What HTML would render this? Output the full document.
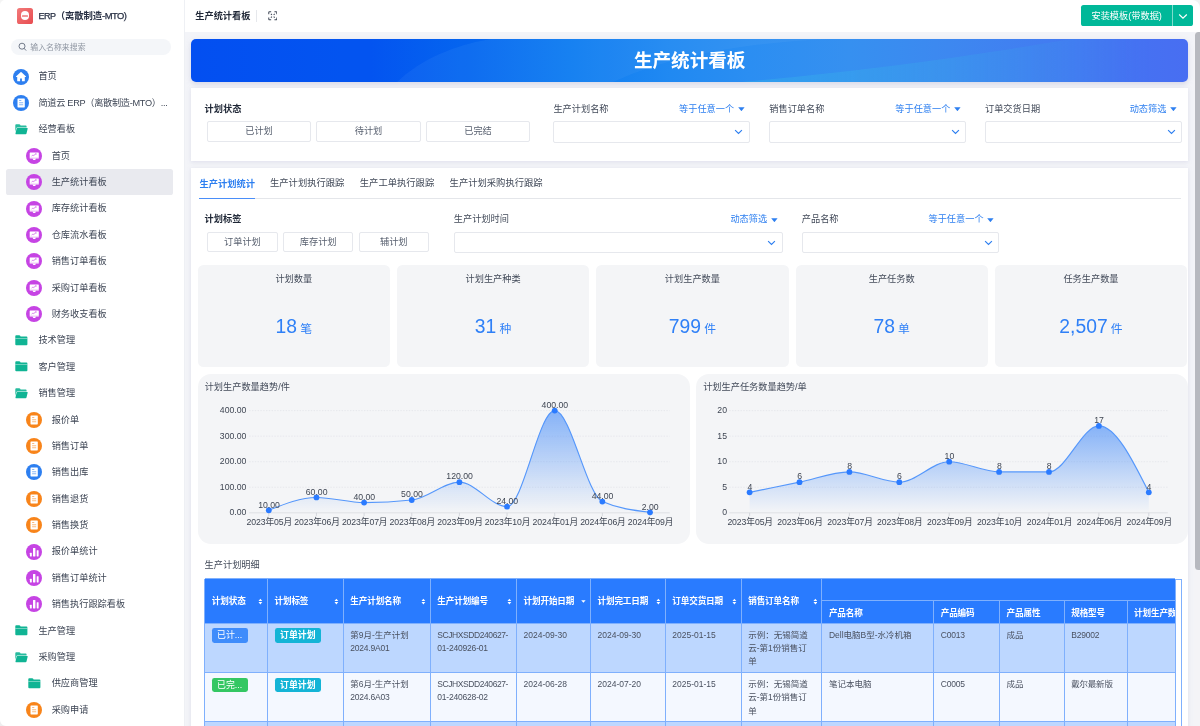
<!DOCTYPE html>
<html lang="zh"><head><meta charset="utf-8"><title>生产统计看板</title>
<style>
html,body{margin:0;padding:0;}
body{width:1200px;height:726px;overflow:hidden;background:#f3f4f8;font-family:"Liberation Sans", "Noto Sans CJK SC", sans-serif;position:relative;}
#root{position:absolute;left:0;top:0;width:1200px;height:726px;overflow:hidden;will-change:transform;}
.b{position:absolute;display:block;}
.t{position:absolute;white-space:nowrap;}
</style></head><body><div id="root">
<div class="b" style="left:0;top:0;width:184px;height:726px;background:#fff;"></div>
<div class="b" style="left:17px;top:7.5px;width:16px;height:16px;border-radius:2.6px;background:linear-gradient(135deg,#f27a7a,#e84c50);"></div>
<div class="b" style="left:20.8px;top:11.3px;width:8.4px;height:8.4px;border-radius:50%;background:#fff;"></div>
<div class="b" style="left:22.3px;top:14.5px;width:5.4px;height:2px;background:#f29a9a;border-radius:.6px"></div>
<div class="t" style="top:9.02px;font-size:9.4px;line-height:13.16px;color:#283044;font-weight:bold;left:38.50px;letter-spacing:-0.1px;"><span style="font-weight:normal;-webkit-text-stroke:0.25px #283044;letter-spacing:-0.55px;margin-right:0.3px;font-size:9px">ERP</span>（离散制造<span style="font-weight:normal;-webkit-text-stroke:0.25px #283044;letter-spacing:-0.5px">-MTO)</span></div>
<div class="b" style="left:11.00px;top:38.80px;width:160.00px;height:16.20px;background:#f4f6f9;border-radius:8.1px;"></div>
<svg class="b" style="left:17.5px;top:42.3px" width="10" height="10" viewBox="0 0 10 10"><circle cx="4" cy="4.2" r="3" fill="none" stroke="#5c6577" stroke-width="0.85"/><path d="M6.2 6.5L7.9 8.3" stroke="#5c6577" stroke-width="0.85" stroke-linecap="round"/></svg>
<div class="t" style="top:41.67px;font-size:7.9px;line-height:11.06px;color:#9097a3;left:30.30px;">输入名称来搜索</div>
<svg class="b" style="left:13.05px;top:68.60px" width="16" height="16" viewBox="0 0 16 16"><circle cx="8" cy="8" r="8" fill="#2d7ff0"/><path d="M8 2.9Q8.25 2.9 8.5 3.15L13 7.4Q13.2 7.9 12.7 7.9H11.8V11.7Q11.8 12.2 11.3 12.2H8.9V9.4H7.1V12.2H4.7Q4.2 12.2 4.2 11.7V7.9H3.3Q2.8 7.9 3 7.4L7.5 3.15Q7.75 2.9 8 2.9z" fill="#fff"/></svg>
<div class="t" style="top:70.46px;font-size:9.2px;line-height:12.88px;color:#3d4554;left:38.40px;">首页</div>
<svg class="b" style="left:13.05px;top:94.99px" width="16" height="16" viewBox="0 0 16 16"><circle cx="8" cy="8" r="8" fill="#2d7ff0"/><rect x="4.5" y="3.5" width="7.3" height="8.9" rx="0.6" fill="#fff"/><rect x="6.1" y="5.2" width="2.2" height="0.8" fill="#2d7ff0" opacity=".7"/><rect x="6.1" y="7.4" width="4.1" height="0.8" fill="#2d7ff0" opacity=".7"/><rect x="6.1" y="9.4" width="4.1" height="0.8" fill="#2d7ff0" opacity=".7"/></svg>
<div class="t" style="top:96.85px;font-size:9.2px;line-height:12.88px;color:#3d4554;left:38.40px;letter-spacing:-0.3px;">简道云 ERP（离散制造-MTO）...</div>
<svg class="b" style="left:14.65px;top:124.38px" width="13" height="10.5" viewBox="0 0 13 10.5"><path d="M0.3 1.2Q0.3 0.3 1.2 0.3H4.3Q4.9 0.3 5.2 0.8L5.6 1.5H10.7Q11.6 1.5 11.6 2.4V3.4H2.2Q1.5 3.4 1.3 4.1L0.3 8z" fill="#10b494" opacity=".9"/><path d="M2.4 3.9H12.2Q12.9 3.9 12.7 4.6L11.5 9.6Q11.3 10.2 10.6 10.2H0.9Q0.3 10.2 0.5 9.5L1.6 4.6Q1.8 3.9 2.4 3.9z" fill="#10b494"/></svg>
<div class="t" style="top:123.24px;font-size:9.2px;line-height:12.88px;color:#3d4554;left:38.40px;">经营看板</div>
<svg class="b" style="left:26.30px;top:147.77px" width="16" height="16" viewBox="0 0 16 16"><circle cx="8" cy="8" r="8" fill="#c644e4"/><rect x="3.7" y="4.6" width="9.1" height="6" rx="0.4" fill="#fff"/><path d="M6.5 10.5h3.5l-0.8 1.5h-1.9z" fill="#fff"/><rect x="3.7" y="9.3" width="9.1" height="0.5" fill="#c644e4" opacity=".28"/><path d="M5.6 8.3L6.9 6.9L7.7 7.6L9.2 6.3" stroke="#c644e4" stroke-width="0.75" fill="none" opacity=".85"/><circle cx="9.9" cy="6.1" r="0.75" fill="#c644e4" opacity=".85"/></svg>
<div class="t" style="top:149.63px;font-size:9.2px;line-height:12.88px;color:#3d4554;left:51.70px;">首页</div>
<div class="b" style="left:5.60px;top:169.26px;width:167.40px;height:25.80px;background:#e9eaef;border-radius:2.6px;"></div>
<svg class="b" style="left:26.30px;top:174.16px" width="16" height="16" viewBox="0 0 16 16"><circle cx="8" cy="8" r="8" fill="#c644e4"/><rect x="3.7" y="4.6" width="9.1" height="6" rx="0.4" fill="#fff"/><path d="M6.5 10.5h3.5l-0.8 1.5h-1.9z" fill="#fff"/><rect x="3.7" y="9.3" width="9.1" height="0.5" fill="#c644e4" opacity=".28"/><path d="M5.6 8.3L6.9 6.9L7.7 7.6L9.2 6.3" stroke="#c644e4" stroke-width="0.75" fill="none" opacity=".85"/><circle cx="9.9" cy="6.1" r="0.75" fill="#c644e4" opacity=".85"/></svg>
<div class="t" style="top:176.02px;font-size:9.2px;line-height:12.88px;color:#3d4554;left:51.70px;">生产统计看板</div>
<svg class="b" style="left:26.30px;top:200.55px" width="16" height="16" viewBox="0 0 16 16"><circle cx="8" cy="8" r="8" fill="#c644e4"/><rect x="3.7" y="4.6" width="9.1" height="6" rx="0.4" fill="#fff"/><path d="M6.5 10.5h3.5l-0.8 1.5h-1.9z" fill="#fff"/><rect x="3.7" y="9.3" width="9.1" height="0.5" fill="#c644e4" opacity=".28"/><path d="M5.6 8.3L6.9 6.9L7.7 7.6L9.2 6.3" stroke="#c644e4" stroke-width="0.75" fill="none" opacity=".85"/><circle cx="9.9" cy="6.1" r="0.75" fill="#c644e4" opacity=".85"/></svg>
<div class="t" style="top:202.41px;font-size:9.2px;line-height:12.88px;color:#3d4554;left:51.70px;">库存统计看板</div>
<svg class="b" style="left:26.30px;top:226.94px" width="16" height="16" viewBox="0 0 16 16"><circle cx="8" cy="8" r="8" fill="#c644e4"/><rect x="3.7" y="4.6" width="9.1" height="6" rx="0.4" fill="#fff"/><path d="M6.5 10.5h3.5l-0.8 1.5h-1.9z" fill="#fff"/><rect x="3.7" y="9.3" width="9.1" height="0.5" fill="#c644e4" opacity=".28"/><path d="M5.6 8.3L6.9 6.9L7.7 7.6L9.2 6.3" stroke="#c644e4" stroke-width="0.75" fill="none" opacity=".85"/><circle cx="9.9" cy="6.1" r="0.75" fill="#c644e4" opacity=".85"/></svg>
<div class="t" style="top:228.80px;font-size:9.2px;line-height:12.88px;color:#3d4554;left:51.70px;">仓库流水看板</div>
<svg class="b" style="left:26.30px;top:253.33px" width="16" height="16" viewBox="0 0 16 16"><circle cx="8" cy="8" r="8" fill="#c644e4"/><rect x="3.7" y="4.6" width="9.1" height="6" rx="0.4" fill="#fff"/><path d="M6.5 10.5h3.5l-0.8 1.5h-1.9z" fill="#fff"/><rect x="3.7" y="9.3" width="9.1" height="0.5" fill="#c644e4" opacity=".28"/><path d="M5.6 8.3L6.9 6.9L7.7 7.6L9.2 6.3" stroke="#c644e4" stroke-width="0.75" fill="none" opacity=".85"/><circle cx="9.9" cy="6.1" r="0.75" fill="#c644e4" opacity=".85"/></svg>
<div class="t" style="top:255.19px;font-size:9.2px;line-height:12.88px;color:#3d4554;left:51.70px;">销售订单看板</div>
<svg class="b" style="left:26.30px;top:279.72px" width="16" height="16" viewBox="0 0 16 16"><circle cx="8" cy="8" r="8" fill="#c644e4"/><rect x="3.7" y="4.6" width="9.1" height="6" rx="0.4" fill="#fff"/><path d="M6.5 10.5h3.5l-0.8 1.5h-1.9z" fill="#fff"/><rect x="3.7" y="9.3" width="9.1" height="0.5" fill="#c644e4" opacity=".28"/><path d="M5.6 8.3L6.9 6.9L7.7 7.6L9.2 6.3" stroke="#c644e4" stroke-width="0.75" fill="none" opacity=".85"/><circle cx="9.9" cy="6.1" r="0.75" fill="#c644e4" opacity=".85"/></svg>
<div class="t" style="top:281.58px;font-size:9.2px;line-height:12.88px;color:#3d4554;left:51.70px;">采购订单看板</div>
<svg class="b" style="left:26.30px;top:306.11px" width="16" height="16" viewBox="0 0 16 16"><circle cx="8" cy="8" r="8" fill="#c644e4"/><rect x="3.7" y="4.6" width="9.1" height="6" rx="0.4" fill="#fff"/><path d="M6.5 10.5h3.5l-0.8 1.5h-1.9z" fill="#fff"/><rect x="3.7" y="9.3" width="9.1" height="0.5" fill="#c644e4" opacity=".28"/><path d="M5.6 8.3L6.9 6.9L7.7 7.6L9.2 6.3" stroke="#c644e4" stroke-width="0.75" fill="none" opacity=".85"/><circle cx="9.9" cy="6.1" r="0.75" fill="#c644e4" opacity=".85"/></svg>
<div class="t" style="top:307.97px;font-size:9.2px;line-height:12.88px;color:#3d4554;left:51.70px;">财务收支看板</div>
<svg class="b" style="left:14.65px;top:335.10px" width="13" height="10.5" viewBox="0 0 13 10.5"><path d="M0.3 1.2Q0.3 0.3 1.2 0.3H4.3Q4.9 0.3 5.2 0.8L5.6 1.5H11.5Q12.4 1.5 12.4 2.4V9.3Q12.4 10.2 11.5 10.2H1.2Q0.3 10.2 0.3 9.3z" fill="#10b494"/><rect x="0.3" y="3.1" width="12.1" height="0.9" fill="#fff" opacity=".45"/></svg>
<div class="t" style="top:334.36px;font-size:9.2px;line-height:12.88px;color:#3d4554;left:38.40px;">技术管理</div>
<svg class="b" style="left:14.65px;top:361.49px" width="13" height="10.5" viewBox="0 0 13 10.5"><path d="M0.3 1.2Q0.3 0.3 1.2 0.3H4.3Q4.9 0.3 5.2 0.8L5.6 1.5H11.5Q12.4 1.5 12.4 2.4V9.3Q12.4 10.2 11.5 10.2H1.2Q0.3 10.2 0.3 9.3z" fill="#10b494"/><rect x="0.3" y="3.1" width="12.1" height="0.9" fill="#fff" opacity=".45"/></svg>
<div class="t" style="top:360.75px;font-size:9.2px;line-height:12.88px;color:#3d4554;left:38.40px;">客户管理</div>
<svg class="b" style="left:14.65px;top:388.28px" width="13" height="10.5" viewBox="0 0 13 10.5"><path d="M0.3 1.2Q0.3 0.3 1.2 0.3H4.3Q4.9 0.3 5.2 0.8L5.6 1.5H10.7Q11.6 1.5 11.6 2.4V3.4H2.2Q1.5 3.4 1.3 4.1L0.3 8z" fill="#10b494" opacity=".9"/><path d="M2.4 3.9H12.2Q12.9 3.9 12.7 4.6L11.5 9.6Q11.3 10.2 10.6 10.2H0.9Q0.3 10.2 0.5 9.5L1.6 4.6Q1.8 3.9 2.4 3.9z" fill="#10b494"/></svg>
<div class="t" style="top:387.14px;font-size:9.2px;line-height:12.88px;color:#3d4554;left:38.40px;">销售管理</div>
<svg class="b" style="left:26.30px;top:411.67px" width="16" height="16" viewBox="0 0 16 16"><circle cx="8" cy="8" r="8" fill="#f8841a"/><rect x="4.5" y="3.5" width="7.3" height="8.9" rx="0.6" fill="#fff"/><rect x="6.1" y="5.2" width="2.2" height="0.8" fill="#f8841a" opacity=".7"/><rect x="6.1" y="7.4" width="4.1" height="0.8" fill="#f8841a" opacity=".7"/><rect x="6.1" y="9.4" width="4.1" height="0.8" fill="#f8841a" opacity=".7"/></svg>
<div class="t" style="top:413.53px;font-size:9.2px;line-height:12.88px;color:#3d4554;left:51.70px;">报价单</div>
<svg class="b" style="left:26.30px;top:438.06px" width="16" height="16" viewBox="0 0 16 16"><circle cx="8" cy="8" r="8" fill="#f8841a"/><rect x="4.5" y="3.5" width="7.3" height="8.9" rx="0.6" fill="#fff"/><rect x="6.1" y="5.2" width="2.2" height="0.8" fill="#f8841a" opacity=".7"/><rect x="6.1" y="7.4" width="4.1" height="0.8" fill="#f8841a" opacity=".7"/><rect x="6.1" y="9.4" width="4.1" height="0.8" fill="#f8841a" opacity=".7"/></svg>
<div class="t" style="top:439.92px;font-size:9.2px;line-height:12.88px;color:#3d4554;left:51.70px;">销售订单</div>
<svg class="b" style="left:26.30px;top:464.45px" width="16" height="16" viewBox="0 0 16 16"><circle cx="8" cy="8" r="8" fill="#2d7ff0"/><rect x="4.5" y="3.5" width="7.3" height="8.9" rx="0.6" fill="#fff"/><rect x="6.1" y="5.2" width="2.2" height="0.8" fill="#2d7ff0" opacity=".7"/><rect x="6.1" y="7.4" width="4.1" height="0.8" fill="#2d7ff0" opacity=".7"/><rect x="6.1" y="9.4" width="4.1" height="0.8" fill="#2d7ff0" opacity=".7"/></svg>
<div class="t" style="top:466.31px;font-size:9.2px;line-height:12.88px;color:#3d4554;left:51.70px;">销售出库</div>
<svg class="b" style="left:26.30px;top:490.84px" width="16" height="16" viewBox="0 0 16 16"><circle cx="8" cy="8" r="8" fill="#f8841a"/><rect x="4.5" y="3.5" width="7.3" height="8.9" rx="0.6" fill="#fff"/><rect x="6.1" y="5.2" width="2.2" height="0.8" fill="#f8841a" opacity=".7"/><rect x="6.1" y="7.4" width="4.1" height="0.8" fill="#f8841a" opacity=".7"/><rect x="6.1" y="9.4" width="4.1" height="0.8" fill="#f8841a" opacity=".7"/></svg>
<div class="t" style="top:492.70px;font-size:9.2px;line-height:12.88px;color:#3d4554;left:51.70px;">销售退货</div>
<svg class="b" style="left:26.30px;top:517.23px" width="16" height="16" viewBox="0 0 16 16"><circle cx="8" cy="8" r="8" fill="#f8841a"/><rect x="4.5" y="3.5" width="7.3" height="8.9" rx="0.6" fill="#fff"/><rect x="6.1" y="5.2" width="2.2" height="0.8" fill="#f8841a" opacity=".7"/><rect x="6.1" y="7.4" width="4.1" height="0.8" fill="#f8841a" opacity=".7"/><rect x="6.1" y="9.4" width="4.1" height="0.8" fill="#f8841a" opacity=".7"/></svg>
<div class="t" style="top:519.09px;font-size:9.2px;line-height:12.88px;color:#3d4554;left:51.70px;">销售换货</div>
<svg class="b" style="left:26.30px;top:543.62px" width="16" height="16" viewBox="0 0 16 16"><circle cx="8" cy="8" r="8" fill="#c644e4"/><rect x="3.9" y="8.8" width="1.9" height="3.7" rx=".4" fill="#fff"/><rect x="7" y="3.9" width="2.4" height="8.6" rx=".4" fill="#fff"/><rect x="10.7" y="6.2" width="1.9" height="6.3" rx=".4" fill="#fff"/></svg>
<div class="t" style="top:545.48px;font-size:9.2px;line-height:12.88px;color:#3d4554;left:51.70px;">报价单统计</div>
<svg class="b" style="left:26.30px;top:570.01px" width="16" height="16" viewBox="0 0 16 16"><circle cx="8" cy="8" r="8" fill="#c644e4"/><rect x="3.9" y="8.8" width="1.9" height="3.7" rx=".4" fill="#fff"/><rect x="7" y="3.9" width="2.4" height="8.6" rx=".4" fill="#fff"/><rect x="10.7" y="6.2" width="1.9" height="6.3" rx=".4" fill="#fff"/></svg>
<div class="t" style="top:571.87px;font-size:9.2px;line-height:12.88px;color:#3d4554;left:51.70px;">销售订单统计</div>
<svg class="b" style="left:26.30px;top:596.40px" width="16" height="16" viewBox="0 0 16 16"><circle cx="8" cy="8" r="8" fill="#c644e4"/><rect x="3.9" y="8.8" width="1.9" height="3.7" rx=".4" fill="#fff"/><rect x="7" y="3.9" width="2.4" height="8.6" rx=".4" fill="#fff"/><rect x="10.7" y="6.2" width="1.9" height="6.3" rx=".4" fill="#fff"/></svg>
<div class="t" style="top:598.26px;font-size:9.2px;line-height:12.88px;color:#3d4554;left:51.70px;">销售执行跟踪看板</div>
<svg class="b" style="left:14.65px;top:625.39px" width="13" height="10.5" viewBox="0 0 13 10.5"><path d="M0.3 1.2Q0.3 0.3 1.2 0.3H4.3Q4.9 0.3 5.2 0.8L5.6 1.5H11.5Q12.4 1.5 12.4 2.4V9.3Q12.4 10.2 11.5 10.2H1.2Q0.3 10.2 0.3 9.3z" fill="#10b494"/><rect x="0.3" y="3.1" width="12.1" height="0.9" fill="#fff" opacity=".45"/></svg>
<div class="t" style="top:624.65px;font-size:9.2px;line-height:12.88px;color:#3d4554;left:38.40px;">生产管理</div>
<svg class="b" style="left:14.65px;top:652.18px" width="13" height="10.5" viewBox="0 0 13 10.5"><path d="M0.3 1.2Q0.3 0.3 1.2 0.3H4.3Q4.9 0.3 5.2 0.8L5.6 1.5H10.7Q11.6 1.5 11.6 2.4V3.4H2.2Q1.5 3.4 1.3 4.1L0.3 8z" fill="#10b494" opacity=".9"/><path d="M2.4 3.9H12.2Q12.9 3.9 12.7 4.6L11.5 9.6Q11.3 10.2 10.6 10.2H0.9Q0.3 10.2 0.5 9.5L1.6 4.6Q1.8 3.9 2.4 3.9z" fill="#10b494"/></svg>
<div class="t" style="top:651.04px;font-size:9.2px;line-height:12.88px;color:#3d4554;left:38.40px;">采购管理</div>
<svg class="b" style="left:27.90px;top:678.17px" width="13" height="10.5" viewBox="0 0 13 10.5"><path d="M0.3 1.2Q0.3 0.3 1.2 0.3H4.3Q4.9 0.3 5.2 0.8L5.6 1.5H11.5Q12.4 1.5 12.4 2.4V9.3Q12.4 10.2 11.5 10.2H1.2Q0.3 10.2 0.3 9.3z" fill="#10b494"/><rect x="0.3" y="3.1" width="12.1" height="0.9" fill="#fff" opacity=".45"/></svg>
<div class="t" style="top:677.43px;font-size:9.2px;line-height:12.88px;color:#3d4554;left:51.70px;">供应商管理</div>
<svg class="b" style="left:26.30px;top:701.96px" width="16" height="16" viewBox="0 0 16 16"><circle cx="8" cy="8" r="8" fill="#f8841a"/><rect x="4.5" y="3.5" width="7.3" height="8.9" rx="0.6" fill="#fff"/><rect x="6.1" y="5.2" width="2.2" height="0.8" fill="#f8841a" opacity=".7"/><rect x="6.1" y="7.4" width="4.1" height="0.8" fill="#f8841a" opacity=".7"/><rect x="6.1" y="9.4" width="4.1" height="0.8" fill="#f8841a" opacity=".7"/></svg>
<div class="t" style="top:703.82px;font-size:9.2px;line-height:12.88px;color:#3d4554;left:51.70px;">采购申请</div>
<div class="b" style="left:184px;top:0;width:1016px;height:32px;background:#fff;"></div>
<div class="b" style="left:184px;top:0;width:1px;height:726px;background:#eef0f4;"></div>
<div class="t" style="top:9.86px;font-size:9.2px;line-height:12.88px;color:#1f2736;font-weight:bold;left:195.30px;">生产统计看板</div>
<div class="b" style="left:256.20px;top:9.50px;width:0.70px;height:12.50px;background:#e6e8ec;"></div>
<svg class="b" style="left:267.6px;top:11.2px" width="9.6" height="9.6" viewBox="0 0 10 10"><g fill="none" stroke="#3f4756" stroke-width="1.05"><path d="M0.8 3.3V1.6Q0.8 0.8 1.6 0.8H3.3"/><path d="M6.7 0.8H8.4Q9.2 0.8 9.2 1.6V3.3"/><path d="M9.2 6.7V8.4Q9.2 9.2 8.4 9.2H6.7"/><path d="M3.3 9.2H1.6Q0.8 9.2 0.8 8.4V6.7"/><path d="M3 3L4.1 4.1M7 3L5.9 4.1M3 7L4.1 5.9M7 7L5.9 5.9"/></g></svg>
<div class="b" style="left:1080.80px;top:5.10px;width:112.70px;height:21.20px;background:#00b899;border-radius:2.6px;"></div>
<div class="b" style="left:1172.10px;top:5.10px;width:0.70px;height:21.20px;background:#7fdccc;"></div>
<div class="t" style="top:9.76px;font-size:9.2px;line-height:12.88px;color:#fff;left:1076.70px;width:100px;text-align:center;">安装模板(带数据)</div>
<svg class="b" style="left:1178px;top:13px" width="10" height="7" viewBox="0 0 10 7"><path d="M1.2 1.5L5 5.1L8.8 1.5" fill="none" stroke="#fff" stroke-width="1.2"/></svg>
<div class="b" style="left:191px;top:38.8px;width:997px;height:43.2px;border-radius:5px;overflow:hidden;box-shadow:0 2px 5px rgba(160,160,200,.35);
background:linear-gradient(90deg,#0450f2 0%,#0456f1 18%,#0668f0 28%,#0e7cf1 38%,#2089f2 48%,#2b8ef2 56%,#3690f0 66%,#3d88f0 76%,#427cf1 86%,#4572f2 94%,#486ef2 100%);">
<svg width="997" height="44" viewBox="0 0 997 44" style="position:absolute;left:0;top:0"><defs><linearGradient id="bw" x1="0" y1="0" x2="1" y2="0"><stop offset="0" stop-color="#38b4ea" stop-opacity=".42"/><stop offset=".55" stop-color="#38b4ea" stop-opacity=".22"/><stop offset="1" stop-color="#38b4ea" stop-opacity="0"/></linearGradient></defs><path d="M0 0H300Q240 10 205 44H0z" fill="#0046e8" opacity=".06"/><path d="M300 0Q240 10 205 44H420Q500 6 640 0z" fill="#fff" opacity=".04"/><path d="M540 44Q720 28 880 0H960V44z" fill="url(#bw)"/></svg></div>
<div class="t" style="top:47.58px;font-size:18.6px;line-height:26.04px;color:#fff;font-weight:bold;left:489.70px;width:400px;text-align:center;">生产统计看板</div>
<div class="b" style="left:191.00px;top:88.40px;width:997.00px;height:72.60px;background:#fff;box-shadow:0 1px 4px rgba(170,170,205,.28);"></div>
<div class="t" style="top:102.56px;font-size:9.2px;line-height:12.88px;color:#1f2736;font-weight:bold;left:204.60px;">计划状态</div>
<div class="b" style="left:207.40px;top:120.50px;width:103.20px;height:21.00px;border:1px solid #e6e8ed;border-radius:2px;box-sizing:border-box;background:#fff;"></div>
<div class="t" style="top:124.66px;font-size:9.2px;line-height:12.88px;color:#596170;left:207.40px;width:103.20000000000002px;text-align:center;">已计划</div>
<div class="b" style="left:316.40px;top:120.50px;width:104.20px;height:21.00px;border:1px solid #e6e8ed;border-radius:2px;box-sizing:border-box;background:#fff;"></div>
<div class="t" style="top:124.66px;font-size:9.2px;line-height:12.88px;color:#596170;left:316.40px;width:104.20000000000005px;text-align:center;">待计划</div>
<div class="b" style="left:426.00px;top:120.50px;width:104.00px;height:21.00px;border:1px solid #e6e8ed;border-radius:2px;box-sizing:border-box;background:#fff;"></div>
<div class="t" style="top:124.66px;font-size:9.2px;line-height:12.88px;color:#596170;left:426.00px;width:104px;text-align:center;">已完结</div>
<div class="t" style="top:102.56px;font-size:9.2px;line-height:12.88px;color:#434b5a;left:553.40px;">生产计划名称</div>
<div class="t" style="top:102.56px;font-size:9.2px;line-height:12.88px;color:#2d7ff0;left:614.20px;width:120px;text-align:right;">等于任意一个</div>
<svg class="b" style="left:737.80px;top:107.10px" width="6.8" height="4.4" viewBox="0 0 6.8 4.4"><path d="M0.2 0.3H6.6L3.4 4.2z" fill="#2d7ff0"/></svg>
<div class="b" style="left:553.40px;top:121.40px;width:196.20px;height:21.20px;border:1px solid #e6e8ed;border-radius:2px;box-sizing:border-box;background:#fff;"></div>
<svg class="b" style="left:734.40px;top:129.40px" width="9" height="6" viewBox="0 0 9 6"><path d="M1.1 1.1L4.5 4.5L7.9 1.1" fill="none" stroke="#2d7ff0" stroke-width="1.15"/></svg>
<div class="t" style="top:102.56px;font-size:9.2px;line-height:12.88px;color:#434b5a;left:769.30px;">销售订单名称</div>
<div class="t" style="top:102.56px;font-size:9.2px;line-height:12.88px;color:#2d7ff0;left:830.40px;width:120px;text-align:right;">等于任意一个</div>
<svg class="b" style="left:954.00px;top:107.10px" width="6.8" height="4.4" viewBox="0 0 6.8 4.4"><path d="M0.2 0.3H6.6L3.4 4.2z" fill="#2d7ff0"/></svg>
<div class="b" style="left:769.30px;top:121.40px;width:196.50px;height:21.20px;border:1px solid #e6e8ed;border-radius:2px;box-sizing:border-box;background:#fff;"></div>
<svg class="b" style="left:950.60px;top:129.40px" width="9" height="6" viewBox="0 0 9 6"><path d="M1.1 1.1L4.5 4.5L7.9 1.1" fill="none" stroke="#2d7ff0" stroke-width="1.15"/></svg>
<div class="t" style="top:102.56px;font-size:9.2px;line-height:12.88px;color:#434b5a;left:985.00px;">订单交货日期</div>
<div class="t" style="top:102.56px;font-size:9.2px;line-height:12.88px;color:#2d7ff0;left:1046.40px;width:120px;text-align:right;">动态筛选</div>
<svg class="b" style="left:1170.00px;top:107.10px" width="6.8" height="4.4" viewBox="0 0 6.8 4.4"><path d="M0.2 0.3H6.6L3.4 4.2z" fill="#2d7ff0"/></svg>
<div class="b" style="left:985.00px;top:121.40px;width:196.80px;height:21.20px;border:1px solid #e6e8ed;border-radius:2px;box-sizing:border-box;background:#fff;"></div>
<svg class="b" style="left:1166.60px;top:129.40px" width="9" height="6" viewBox="0 0 9 6"><path d="M1.1 1.1L4.5 4.5L7.9 1.1" fill="none" stroke="#2d7ff0" stroke-width="1.15"/></svg>
<div class="b" style="left:191.00px;top:167.50px;width:997.00px;height:572.50px;background:#fff;box-shadow:0 1px 4px rgba(170,170,205,.28);"></div>
<div class="b" style="left:199.30px;top:198.10px;width:981.70px;height:0.70px;background:#e4e6ea;"></div>
<div class="t" style="top:177.53px;font-size:9.25px;line-height:12.95px;color:#2d7ff0;font-weight:bold;left:199.50px;">生产计划统计</div>
<div class="b" style="left:199.30px;top:197.55px;width:55.30px;height:1.30px;background:#4a8ef9;"></div>
<div class="t" style="top:177.49px;font-size:9.3px;line-height:13.02px;color:#434b5a;left:270.00px;">生产计划执行跟踪</div>
<div class="t" style="top:177.49px;font-size:9.3px;line-height:13.02px;color:#434b5a;left:359.80px;">生产工单执行跟踪</div>
<div class="t" style="top:177.49px;font-size:9.3px;line-height:13.02px;color:#434b5a;left:449.60px;">生产计划采购执行跟踪</div>
<div class="t" style="top:213.36px;font-size:9.2px;line-height:12.88px;color:#1f2736;font-weight:bold;left:204.60px;">计划标签</div>
<div class="b" style="left:206.90px;top:231.50px;width:71.10px;height:20.90px;border:1px solid #e6e8ed;border-radius:2px;box-sizing:border-box;background:#fff;"></div>
<div class="t" style="top:235.61px;font-size:9.2px;line-height:12.88px;color:#596170;left:206.90px;width:71.1px;text-align:center;">订单计划</div>
<div class="b" style="left:283.00px;top:231.50px;width:70.40px;height:20.90px;border:1px solid #e6e8ed;border-radius:2px;box-sizing:border-box;background:#fff;"></div>
<div class="t" style="top:235.61px;font-size:9.2px;line-height:12.88px;color:#596170;left:283.00px;width:70.39999999999998px;text-align:center;">库存计划</div>
<div class="b" style="left:358.50px;top:231.50px;width:70.50px;height:20.90px;border:1px solid #e6e8ed;border-radius:2px;box-sizing:border-box;background:#fff;"></div>
<div class="t" style="top:235.61px;font-size:9.2px;line-height:12.88px;color:#596170;left:358.50px;width:70.5px;text-align:center;">辅计划</div>
<div class="t" style="top:213.36px;font-size:9.2px;line-height:12.88px;color:#434b5a;left:453.80px;">生产计划时间</div>
<div class="t" style="top:213.36px;font-size:9.2px;line-height:12.88px;color:#2d7ff0;left:647.20px;width:120px;text-align:right;">动态筛选</div>
<svg class="b" style="left:770.80px;top:217.90px" width="6.8" height="4.4" viewBox="0 0 6.8 4.4"><path d="M0.2 0.3H6.6L3.4 4.2z" fill="#2d7ff0"/></svg>
<div class="b" style="left:453.80px;top:232.20px;width:328.80px;height:21.30px;border:1px solid #e6e8ed;border-radius:2px;box-sizing:border-box;background:#fff;"></div>
<svg class="b" style="left:767.40px;top:240.25px" width="9" height="6" viewBox="0 0 9 6"><path d="M1.1 1.1L4.5 4.5L7.9 1.1" fill="none" stroke="#2d7ff0" stroke-width="1.15"/></svg>
<div class="t" style="top:213.36px;font-size:9.2px;line-height:12.88px;color:#434b5a;left:801.80px;">产品名称</div>
<div class="t" style="top:213.36px;font-size:9.2px;line-height:12.88px;color:#2d7ff0;left:863.60px;width:120px;text-align:right;">等于任意一个</div>
<svg class="b" style="left:987.20px;top:217.90px" width="6.8" height="4.4" viewBox="0 0 6.8 4.4"><path d="M0.2 0.3H6.6L3.4 4.2z" fill="#2d7ff0"/></svg>
<div class="b" style="left:801.80px;top:232.20px;width:197.20px;height:21.30px;border:1px solid #e6e8ed;border-radius:2px;box-sizing:border-box;background:#fff;"></div>
<svg class="b" style="left:983.80px;top:240.25px" width="9" height="6" viewBox="0 0 9 6"><path d="M1.1 1.1L4.5 4.5L7.9 1.1" fill="none" stroke="#2d7ff0" stroke-width="1.15"/></svg>
<div class="b" style="left:197.60px;top:265.00px;width:192.40px;height:102.00px;background:#f4f5f7;border-radius:5.5px;"></div>
<div class="t" style="top:272.76px;font-size:9.2px;line-height:12.88px;color:#434b5a;left:203.80px;width:180px;text-align:center;">计划数量</div>
<div class="t" style="left:197.60px;width:192.40px;top:314px;height:26px;line-height:26px;text-align:center;color:#2f80f7;font-size:19.3px;">18<span style="font-size:11.8px;margin-left:3.2px">笔</span></div>
<div class="b" style="left:396.90px;top:265.00px;width:192.40px;height:102.00px;background:#f4f5f7;border-radius:5.5px;"></div>
<div class="t" style="top:272.76px;font-size:9.2px;line-height:12.88px;color:#434b5a;left:403.10px;width:180px;text-align:center;">计划生产种类</div>
<div class="t" style="left:396.90px;width:192.40px;top:314px;height:26px;line-height:26px;text-align:center;color:#2f80f7;font-size:19.3px;">31<span style="font-size:11.8px;margin-left:3.2px">种</span></div>
<div class="b" style="left:596.20px;top:265.00px;width:192.40px;height:102.00px;background:#f4f5f7;border-radius:5.5px;"></div>
<div class="t" style="top:272.76px;font-size:9.2px;line-height:12.88px;color:#434b5a;left:602.40px;width:180px;text-align:center;">计划生产数量</div>
<div class="t" style="left:596.20px;width:192.40px;top:314px;height:26px;line-height:26px;text-align:center;color:#2f80f7;font-size:19.3px;">799<span style="font-size:11.8px;margin-left:3.2px">件</span></div>
<div class="b" style="left:795.50px;top:265.00px;width:192.40px;height:102.00px;background:#f4f5f7;border-radius:5.5px;"></div>
<div class="t" style="top:272.76px;font-size:9.2px;line-height:12.88px;color:#434b5a;left:801.70px;width:180px;text-align:center;">生产任务数</div>
<div class="t" style="left:795.50px;width:192.40px;top:314px;height:26px;line-height:26px;text-align:center;color:#2f80f7;font-size:19.3px;">78<span style="font-size:11.8px;margin-left:3.2px">单</span></div>
<div class="b" style="left:994.80px;top:265.00px;width:192.40px;height:102.00px;background:#f4f5f7;border-radius:5.5px;"></div>
<div class="t" style="top:272.76px;font-size:9.2px;line-height:12.88px;color:#434b5a;left:1001.00px;width:180px;text-align:center;">任务生产数量</div>
<div class="t" style="left:994.80px;width:192.40px;top:314px;height:26px;line-height:26px;text-align:center;color:#2f80f7;font-size:19.3px;">2,507<span style="font-size:11.8px;margin-left:3.2px">件</span></div>
<div class="b" style="left:197.90px;top:374.20px;width:491.70px;height:170.20px;background:#f4f5f7;border-radius:13px;"></div>
<div class="t" style="top:381.46px;font-size:9.2px;line-height:12.88px;color:#434b5a;left:204.70px;">计划生产数量趋势/件</div>
<svg class="b" style="left:0;top:0" width="1200" height="726" viewBox="0 0 1200 726"><defs><linearGradient id="g1" x1="0" y1="0" x2="0" y2="1"><stop offset="0" stop-color="#3c86f8" stop-opacity=".6"/><stop offset="1" stop-color="#3c86f8" stop-opacity="0"/></linearGradient></defs><path d="M249.2 487.25H669.7" stroke="#e1e3e8" stroke-width="0.7" stroke-dasharray="1.4 1.4"/><path d="M249.2 461.70H669.7" stroke="#e1e3e8" stroke-width="0.7" stroke-dasharray="1.4 1.4"/><path d="M249.2 436.15H669.7" stroke="#e1e3e8" stroke-width="0.7" stroke-dasharray="1.4 1.4"/><path d="M249.2 410.60H669.7" stroke="#e1e3e8" stroke-width="0.7" stroke-dasharray="1.4 1.4"/><path d="M249.2 512.80H669.7" stroke="#d9dbe0" stroke-width="0.8"/><path d="M268.80 512.80v3.2" stroke="#c9ccd3" stroke-width="0.7"/><path d="M316.45 512.80v3.2" stroke="#c9ccd3" stroke-width="0.7"/><path d="M364.10 512.80v3.2" stroke="#c9ccd3" stroke-width="0.7"/><path d="M411.75 512.80v3.2" stroke="#c9ccd3" stroke-width="0.7"/><path d="M459.40 512.80v3.2" stroke="#c9ccd3" stroke-width="0.7"/><path d="M507.05 512.80v3.2" stroke="#c9ccd3" stroke-width="0.7"/><path d="M554.70 512.80v3.2" stroke="#c9ccd3" stroke-width="0.7"/><path d="M602.35 512.80v3.2" stroke="#c9ccd3" stroke-width="0.7"/><path d="M650.00 512.80v3.2" stroke="#c9ccd3" stroke-width="0.7"/><path d="M268.80 510.24C284.68 503.86 300.57 497.47 316.45 497.47C332.33 497.47 348.22 502.58 364.10 502.58C379.98 502.58 395.87 501.73 411.75 500.02C427.63 498.32 443.52 482.14 459.40 482.14C475.28 482.14 491.17 506.67 507.05 506.67C522.93 506.67 538.82 410.60 554.70 410.60C570.58 410.60 586.47 494.40 602.35 501.56C618.23 508.71 634.12 510.50 650.00 512.29L650.00 512.80L268.80 512.80Z" fill="url(#g1)"/><path d="M268.80 510.24C284.68 503.86 300.57 497.47 316.45 497.47C332.33 497.47 348.22 502.58 364.10 502.58C379.98 502.58 395.87 501.73 411.75 500.02C427.63 498.32 443.52 482.14 459.40 482.14C475.28 482.14 491.17 506.67 507.05 506.67C522.93 506.67 538.82 410.60 554.70 410.60C570.58 410.60 586.47 494.40 602.35 501.56C618.23 508.71 634.12 510.50 650.00 512.29" fill="none" stroke="#5597fb" stroke-width="1.15"/><circle cx="268.80" cy="510.24" r="2.9" fill="#2b7bff"/><circle cx="316.45" cy="497.47" r="2.9" fill="#2b7bff"/><circle cx="364.10" cy="502.58" r="2.9" fill="#2b7bff"/><circle cx="411.75" cy="500.02" r="2.9" fill="#2b7bff"/><circle cx="459.40" cy="482.14" r="2.9" fill="#2b7bff"/><circle cx="507.05" cy="506.67" r="2.9" fill="#2b7bff"/><circle cx="554.70" cy="410.60" r="2.9" fill="#2b7bff"/><circle cx="602.35" cy="501.56" r="2.9" fill="#2b7bff"/><circle cx="650.00" cy="512.29" r="2.9" fill="#2b7bff"/></svg>
<div class="t" style="top:506.41px;font-size:8.7px;line-height:12.18px;color:#3f4653;left:186.40px;width:60px;text-align:right;">0.00</div>
<div class="t" style="top:480.86px;font-size:8.7px;line-height:12.18px;color:#3f4653;left:186.40px;width:60px;text-align:right;">100.00</div>
<div class="t" style="top:455.31px;font-size:8.7px;line-height:12.18px;color:#3f4653;left:186.40px;width:60px;text-align:right;">200.00</div>
<div class="t" style="top:429.76px;font-size:8.7px;line-height:12.18px;color:#3f4653;left:186.40px;width:60px;text-align:right;">300.00</div>
<div class="t" style="top:404.21px;font-size:8.7px;line-height:12.18px;color:#3f4653;left:186.40px;width:60px;text-align:right;">400.00</div>
<div class="t" style="top:515.81px;font-size:8.7px;line-height:12.18px;color:#3f4653;left:234.40px;width:70px;text-align:center;letter-spacing:-0.1px;">2023年05月</div>
<div class="t" style="top:498.55px;font-size:8.7px;line-height:12.18px;color:#3f4653;left:239.00px;width:60px;text-align:center;">10.00</div>
<div class="t" style="top:515.81px;font-size:8.7px;line-height:12.18px;color:#3f4653;left:282.05px;width:70px;text-align:center;letter-spacing:-0.1px;">2023年06月</div>
<div class="t" style="top:485.78px;font-size:8.7px;line-height:12.18px;color:#3f4653;left:286.65px;width:60px;text-align:center;">60.00</div>
<div class="t" style="top:515.81px;font-size:8.7px;line-height:12.18px;color:#3f4653;left:329.70px;width:70px;text-align:center;letter-spacing:-0.1px;">2023年07月</div>
<div class="t" style="top:490.89px;font-size:8.7px;line-height:12.18px;color:#3f4653;left:334.30px;width:60px;text-align:center;">40.00</div>
<div class="t" style="top:515.81px;font-size:8.7px;line-height:12.18px;color:#3f4653;left:377.35px;width:70px;text-align:center;letter-spacing:-0.1px;">2023年08月</div>
<div class="t" style="top:488.33px;font-size:8.7px;line-height:12.18px;color:#3f4653;left:381.95px;width:60px;text-align:center;">50.00</div>
<div class="t" style="top:515.81px;font-size:8.7px;line-height:12.18px;color:#3f4653;left:425.00px;width:70px;text-align:center;letter-spacing:-0.1px;">2023年09月</div>
<div class="t" style="top:470.45px;font-size:8.7px;line-height:12.18px;color:#3f4653;left:429.60px;width:60px;text-align:center;">120.00</div>
<div class="t" style="top:515.81px;font-size:8.7px;line-height:12.18px;color:#3f4653;left:472.65px;width:70px;text-align:center;letter-spacing:-0.1px;">2023年10月</div>
<div class="t" style="top:494.98px;font-size:8.7px;line-height:12.18px;color:#3f4653;left:477.25px;width:60px;text-align:center;">24.00</div>
<div class="t" style="top:515.81px;font-size:8.7px;line-height:12.18px;color:#3f4653;left:520.30px;width:70px;text-align:center;letter-spacing:-0.1px;">2024年01月</div>
<div class="t" style="top:398.91px;font-size:8.7px;line-height:12.18px;color:#3f4653;left:524.90px;width:60px;text-align:center;">400.00</div>
<div class="t" style="top:515.81px;font-size:8.7px;line-height:12.18px;color:#3f4653;left:567.95px;width:70px;text-align:center;letter-spacing:-0.1px;">2024年06月</div>
<div class="t" style="top:489.87px;font-size:8.7px;line-height:12.18px;color:#3f4653;left:572.55px;width:60px;text-align:center;">44.00</div>
<div class="t" style="top:515.81px;font-size:8.7px;line-height:12.18px;color:#3f4653;left:615.60px;width:70px;text-align:center;letter-spacing:-0.1px;">2024年09月</div>
<div class="t" style="top:500.60px;font-size:8.7px;line-height:12.18px;color:#3f4653;left:620.20px;width:60px;text-align:center;">2.00</div>
<div class="b" style="left:696.10px;top:374.20px;width:491.90px;height:170.20px;background:#f4f5f7;border-radius:13px;"></div>
<div class="t" style="top:381.46px;font-size:9.2px;line-height:12.88px;color:#434b5a;left:703.20px;">计划生产任务数量趋势/单</div>
<svg class="b" style="left:0;top:0" width="1200" height="726" viewBox="0 0 1200 726"><defs><linearGradient id="g2" x1="0" y1="0" x2="0" y2="1"><stop offset="0" stop-color="#3c86f8" stop-opacity=".6"/><stop offset="1" stop-color="#3c86f8" stop-opacity="0"/></linearGradient></defs><path d="M729.3 487.25H1167.8" stroke="#e1e3e8" stroke-width="0.7" stroke-dasharray="1.4 1.4"/><path d="M729.3 461.70H1167.8" stroke="#e1e3e8" stroke-width="0.7" stroke-dasharray="1.4 1.4"/><path d="M729.3 436.15H1167.8" stroke="#e1e3e8" stroke-width="0.7" stroke-dasharray="1.4 1.4"/><path d="M729.3 410.60H1167.8" stroke="#e1e3e8" stroke-width="0.7" stroke-dasharray="1.4 1.4"/><path d="M729.3 512.80H1167.8" stroke="#d9dbe0" stroke-width="0.8"/><path d="M749.60 512.80v3.2" stroke="#c9ccd3" stroke-width="0.7"/><path d="M799.50 512.80v3.2" stroke="#c9ccd3" stroke-width="0.7"/><path d="M849.40 512.80v3.2" stroke="#c9ccd3" stroke-width="0.7"/><path d="M899.30 512.80v3.2" stroke="#c9ccd3" stroke-width="0.7"/><path d="M949.20 512.80v3.2" stroke="#c9ccd3" stroke-width="0.7"/><path d="M999.10 512.80v3.2" stroke="#c9ccd3" stroke-width="0.7"/><path d="M1049.00 512.80v3.2" stroke="#c9ccd3" stroke-width="0.7"/><path d="M1098.90 512.80v3.2" stroke="#c9ccd3" stroke-width="0.7"/><path d="M1148.80 512.80v3.2" stroke="#c9ccd3" stroke-width="0.7"/><path d="M749.60 492.36C766.23 488.95 782.87 485.55 799.50 482.14C816.13 478.73 832.77 471.92 849.40 471.92C866.03 471.92 882.67 482.14 899.30 482.14C915.93 482.14 932.57 461.70 949.20 461.70C965.83 461.70 982.47 471.92 999.10 471.92C1015.73 471.92 1032.37 471.92 1049.00 471.92C1065.63 471.92 1082.27 425.93 1098.90 425.93C1115.53 425.93 1132.17 459.14 1148.80 492.36L1148.80 512.80L749.60 512.80Z" fill="url(#g2)"/><path d="M749.60 492.36C766.23 488.95 782.87 485.55 799.50 482.14C816.13 478.73 832.77 471.92 849.40 471.92C866.03 471.92 882.67 482.14 899.30 482.14C915.93 482.14 932.57 461.70 949.20 461.70C965.83 461.70 982.47 471.92 999.10 471.92C1015.73 471.92 1032.37 471.92 1049.00 471.92C1065.63 471.92 1082.27 425.93 1098.90 425.93C1115.53 425.93 1132.17 459.14 1148.80 492.36" fill="none" stroke="#5597fb" stroke-width="1.15"/><circle cx="749.60" cy="492.36" r="2.9" fill="#2b7bff"/><circle cx="799.50" cy="482.14" r="2.9" fill="#2b7bff"/><circle cx="849.40" cy="471.92" r="2.9" fill="#2b7bff"/><circle cx="899.30" cy="482.14" r="2.9" fill="#2b7bff"/><circle cx="949.20" cy="461.70" r="2.9" fill="#2b7bff"/><circle cx="999.10" cy="471.92" r="2.9" fill="#2b7bff"/><circle cx="1049.00" cy="471.92" r="2.9" fill="#2b7bff"/><circle cx="1098.90" cy="425.93" r="2.9" fill="#2b7bff"/><circle cx="1148.80" cy="492.36" r="2.9" fill="#2b7bff"/></svg>
<div class="t" style="top:506.41px;font-size:8.7px;line-height:12.18px;color:#3f4653;left:667.00px;width:60px;text-align:right;">0</div>
<div class="t" style="top:480.86px;font-size:8.7px;line-height:12.18px;color:#3f4653;left:667.00px;width:60px;text-align:right;">5</div>
<div class="t" style="top:455.31px;font-size:8.7px;line-height:12.18px;color:#3f4653;left:667.00px;width:60px;text-align:right;">10</div>
<div class="t" style="top:429.76px;font-size:8.7px;line-height:12.18px;color:#3f4653;left:667.00px;width:60px;text-align:right;">15</div>
<div class="t" style="top:404.21px;font-size:8.7px;line-height:12.18px;color:#3f4653;left:667.00px;width:60px;text-align:right;">20</div>
<div class="t" style="top:515.81px;font-size:8.7px;line-height:12.18px;color:#3f4653;left:715.20px;width:70px;text-align:center;letter-spacing:-0.1px;">2023年05月</div>
<div class="t" style="top:480.67px;font-size:8.7px;line-height:12.18px;color:#3f4653;left:719.80px;width:60px;text-align:center;">4</div>
<div class="t" style="top:515.81px;font-size:8.7px;line-height:12.18px;color:#3f4653;left:765.10px;width:70px;text-align:center;letter-spacing:-0.1px;">2023年06月</div>
<div class="t" style="top:470.45px;font-size:8.7px;line-height:12.18px;color:#3f4653;left:769.70px;width:60px;text-align:center;">6</div>
<div class="t" style="top:515.81px;font-size:8.7px;line-height:12.18px;color:#3f4653;left:815.00px;width:70px;text-align:center;letter-spacing:-0.1px;">2023年07月</div>
<div class="t" style="top:460.23px;font-size:8.7px;line-height:12.18px;color:#3f4653;left:819.60px;width:60px;text-align:center;">8</div>
<div class="t" style="top:515.81px;font-size:8.7px;line-height:12.18px;color:#3f4653;left:864.90px;width:70px;text-align:center;letter-spacing:-0.1px;">2023年08月</div>
<div class="t" style="top:470.45px;font-size:8.7px;line-height:12.18px;color:#3f4653;left:869.50px;width:60px;text-align:center;">6</div>
<div class="t" style="top:515.81px;font-size:8.7px;line-height:12.18px;color:#3f4653;left:914.80px;width:70px;text-align:center;letter-spacing:-0.1px;">2023年09月</div>
<div class="t" style="top:450.01px;font-size:8.7px;line-height:12.18px;color:#3f4653;left:919.40px;width:60px;text-align:center;">10</div>
<div class="t" style="top:515.81px;font-size:8.7px;line-height:12.18px;color:#3f4653;left:964.70px;width:70px;text-align:center;letter-spacing:-0.1px;">2023年10月</div>
<div class="t" style="top:460.23px;font-size:8.7px;line-height:12.18px;color:#3f4653;left:969.30px;width:60px;text-align:center;">8</div>
<div class="t" style="top:515.81px;font-size:8.7px;line-height:12.18px;color:#3f4653;left:1014.60px;width:70px;text-align:center;letter-spacing:-0.1px;">2024年01月</div>
<div class="t" style="top:460.23px;font-size:8.7px;line-height:12.18px;color:#3f4653;left:1019.20px;width:60px;text-align:center;">8</div>
<div class="t" style="top:515.81px;font-size:8.7px;line-height:12.18px;color:#3f4653;left:1064.50px;width:70px;text-align:center;letter-spacing:-0.1px;">2024年06月</div>
<div class="t" style="top:414.24px;font-size:8.7px;line-height:12.18px;color:#3f4653;left:1069.10px;width:60px;text-align:center;">17</div>
<div class="t" style="top:515.81px;font-size:8.7px;line-height:12.18px;color:#3f4653;left:1114.40px;width:70px;text-align:center;letter-spacing:-0.1px;">2024年09月</div>
<div class="t" style="top:480.67px;font-size:8.7px;line-height:12.18px;color:#3f4653;left:1119.00px;width:60px;text-align:center;">4</div>
<div class="t" style="top:559.16px;font-size:9.2px;line-height:12.88px;color:#434b5a;left:204.60px;">生产计划明细</div>
<div class="b" style="left:204.60px;top:578.50px;width:970.40px;height:44.80px;background:#297bff;"></div>
<div class="b" style="left:204.60px;top:623.30px;width:970.40px;height:49.50px;background:#bdd7ff;"></div>
<div class="b" style="left:204.60px;top:672.80px;width:970.40px;height:48.90px;background:#f4f8ff;"></div>
<div class="b" style="left:204.60px;top:721.70px;width:970.40px;height:8.30px;background:#bdd7ff;"></div>
<div class="b" style="left:1175.00px;top:578.50px;width:6.60px;height:151.50px;background:#fff;border:0.7px solid #7fb0fd;box-sizing:border-box;"></div>
<div class="b" style="left:204.25px;top:578.50px;width:0.70px;height:151.50px;background:#7fb0fd;"></div>
<div class="b" style="left:266.95px;top:578.50px;width:0.70px;height:151.50px;background:#7fb0fd;"></div>
<div class="b" style="left:342.75px;top:578.50px;width:0.70px;height:151.50px;background:#7fb0fd;"></div>
<div class="b" style="left:429.75px;top:578.50px;width:0.70px;height:151.50px;background:#7fb0fd;"></div>
<div class="b" style="left:516.05px;top:578.50px;width:0.70px;height:151.50px;background:#7fb0fd;"></div>
<div class="b" style="left:589.95px;top:578.50px;width:0.70px;height:151.50px;background:#7fb0fd;"></div>
<div class="b" style="left:664.75px;top:578.50px;width:0.70px;height:151.50px;background:#7fb0fd;"></div>
<div class="b" style="left:740.65px;top:578.50px;width:0.70px;height:151.50px;background:#7fb0fd;"></div>
<div class="b" style="left:821.35px;top:578.50px;width:0.70px;height:151.50px;background:#7fb0fd;"></div>
<div class="b" style="left:933.15px;top:600.00px;width:0.70px;height:130.00px;background:#7fb0fd;"></div>
<div class="b" style="left:999.05px;top:600.00px;width:0.70px;height:130.00px;background:#7fb0fd;"></div>
<div class="b" style="left:1063.65px;top:600.00px;width:0.70px;height:130.00px;background:#7fb0fd;"></div>
<div class="b" style="left:1126.55px;top:600.00px;width:0.70px;height:130.00px;background:#7fb0fd;"></div>
<div class="b" style="left:1174.65px;top:578.50px;width:0.70px;height:151.50px;background:#7fb0fd;"></div>
<div class="b" style="left:204.60px;top:578.15px;width:970.40px;height:0.70px;background:#7fb0fd;"></div>
<div class="b" style="left:204.60px;top:622.95px;width:970.40px;height:0.70px;background:#7fb0fd;"></div>
<div class="b" style="left:204.60px;top:672.45px;width:970.40px;height:0.70px;background:#7fb0fd;"></div>
<div class="b" style="left:204.60px;top:721.35px;width:970.40px;height:0.70px;background:#7fb0fd;"></div>
<div class="b" style="left:821.70px;top:599.65px;width:353.30px;height:0.70px;background:#7fb0fd;"></div>
<div class="t" style="top:594.98px;font-size:8.6px;line-height:12.04px;color:#fff;font-weight:600;left:211.80px;letter-spacing:-0.15px;">计划状态</div>
<svg class="b" style="left:258.30px;top:597.60px" width="4.8" height="7.2" viewBox="0 0 4.8 7.2"><path d="M2.4 0.7L4.3 3.1H0.5z" fill="#fff"/><path d="M2.4 6.5L4.3 4.1H0.5z" fill="#fff"/></svg>
<div class="t" style="top:594.98px;font-size:8.6px;line-height:12.04px;color:#fff;font-weight:600;left:274.50px;letter-spacing:-0.15px;">计划标签</div>
<svg class="b" style="left:334.10px;top:597.60px" width="4.8" height="7.2" viewBox="0 0 4.8 7.2"><path d="M2.4 0.7L4.3 3.1H0.5z" fill="#fff"/><path d="M2.4 6.5L4.3 4.1H0.5z" fill="#fff"/></svg>
<div class="t" style="top:594.98px;font-size:8.6px;line-height:12.04px;color:#fff;font-weight:600;left:350.30px;letter-spacing:-0.15px;">生产计划名称</div>
<svg class="b" style="left:421.10px;top:597.60px" width="4.8" height="7.2" viewBox="0 0 4.8 7.2"><path d="M2.4 0.7L4.3 3.1H0.5z" fill="#fff"/><path d="M2.4 6.5L4.3 4.1H0.5z" fill="#fff"/></svg>
<div class="t" style="top:594.98px;font-size:8.6px;line-height:12.04px;color:#fff;font-weight:600;left:437.30px;letter-spacing:-0.15px;">生产计划编号</div>
<svg class="b" style="left:507.40px;top:597.60px" width="4.8" height="7.2" viewBox="0 0 4.8 7.2"><path d="M2.4 0.7L4.3 3.1H0.5z" fill="#fff"/><path d="M2.4 6.5L4.3 4.1H0.5z" fill="#fff"/></svg>
<div class="t" style="top:594.98px;font-size:8.6px;line-height:12.04px;color:#fff;font-weight:600;left:523.60px;letter-spacing:-0.15px;">计划开始日期</div>
<svg class="b" style="left:581.30px;top:600.20px" width="4.8" height="3" viewBox="0 0 4.8 3"><path d="M2.4 2.8L4.6 0.2H0.2z" fill="#fff"/></svg>
<div class="t" style="top:594.98px;font-size:8.6px;line-height:12.04px;color:#fff;font-weight:600;left:597.50px;letter-spacing:-0.15px;">计划完工日期</div>
<svg class="b" style="left:656.10px;top:597.60px" width="4.8" height="7.2" viewBox="0 0 4.8 7.2"><path d="M2.4 0.7L4.3 3.1H0.5z" fill="#fff"/><path d="M2.4 6.5L4.3 4.1H0.5z" fill="#fff"/></svg>
<div class="t" style="top:594.98px;font-size:8.6px;line-height:12.04px;color:#fff;font-weight:600;left:672.30px;letter-spacing:-0.15px;">订单交货日期</div>
<svg class="b" style="left:732.00px;top:597.60px" width="4.8" height="7.2" viewBox="0 0 4.8 7.2"><path d="M2.4 0.7L4.3 3.1H0.5z" fill="#fff"/><path d="M2.4 6.5L4.3 4.1H0.5z" fill="#fff"/></svg>
<div class="t" style="top:594.98px;font-size:8.6px;line-height:12.04px;color:#fff;font-weight:600;left:748.20px;letter-spacing:-0.15px;">销售订单名称</div>
<svg class="b" style="left:812.70px;top:597.60px" width="4.8" height="7.2" viewBox="0 0 4.8 7.2"><path d="M2.4 0.7L4.3 3.1H0.5z" fill="#fff"/><path d="M2.4 6.5L4.3 4.1H0.5z" fill="#fff"/></svg>
<div class="t" style="top:606.88px;font-size:8.6px;line-height:12.04px;color:#fff;font-weight:600;left:828.90px;letter-spacing:-0.15px;">产品名称</div>
<div class="t" style="top:606.88px;font-size:8.6px;line-height:12.04px;color:#fff;font-weight:600;left:940.70px;letter-spacing:-0.15px;">产品编码</div>
<div class="t" style="top:606.88px;font-size:8.6px;line-height:12.04px;color:#fff;font-weight:600;left:1006.60px;letter-spacing:-0.15px;">产品属性</div>
<div class="t" style="top:606.88px;font-size:8.6px;line-height:12.04px;color:#fff;font-weight:600;left:1071.20px;letter-spacing:-0.15px;">规格型号</div>
<div class="b" style="left:1126.90px;top:604px;width:47.70px;height:18px;overflow:hidden"><div class="t" style="left:7.2px;top:2.9px;font-size:8.6px;line-height:12px;color:#fff;font-weight:bold;letter-spacing:-0.15px">计划生产数量</div></div>
<div class="b" style="left:211.70px;top:628.10px;width:36.00px;height:14.80px;background:#3f8cfb;border-radius:2.4px;"></div>
<div class="t" style="top:629.37px;font-size:8.9px;line-height:12.46px;color:#fff;left:211.70px;width:36px;text-align:center;">已计...</div>
<div class="b" style="left:274.80px;top:628.10px;width:46.00px;height:14.80px;background:#14b4d6;border-radius:2.4px;"></div>
<div class="t" style="top:629.37px;font-size:8.9px;line-height:12.46px;color:#fff;font-weight:600;left:274.80px;width:46px;text-align:center;">订单计划</div>
<div class="t" style="top:629.65px;font-size:8.5px;line-height:11.90px;color:#4a5160;left:350.20px;">第9月-生产计划</div>
<div class="t" style="top:642.85px;font-size:8.5px;line-height:11.90px;color:#4a5160;left:350.20px;letter-spacing:-0.2px;">2024.9A01</div>
<div class="t" style="top:629.65px;font-size:8.5px;line-height:11.90px;color:#4a5160;left:437.30px;letter-spacing:-0.42px;">SCJHXSDD240627-</div>
<div class="t" style="top:642.85px;font-size:8.5px;line-height:11.90px;color:#4a5160;left:437.30px;letter-spacing:-0.2px;">01-240926-01</div>
<div class="t" style="top:629.65px;font-size:8.5px;line-height:11.90px;color:#4a5160;left:523.60px;">2024-09-30</div>
<div class="t" style="top:629.65px;font-size:8.5px;line-height:11.90px;color:#4a5160;left:597.50px;">2024-09-30</div>
<div class="t" style="top:629.65px;font-size:8.5px;line-height:11.90px;color:#4a5160;left:672.30px;">2025-01-15</div>
<div class="t" style="top:629.65px;font-size:8.5px;line-height:11.90px;color:#4a5160;left:748.20px;">示例：无锡简道</div>
<div class="t" style="top:642.85px;font-size:8.5px;line-height:11.90px;color:#4a5160;left:748.20px;">云-第1份销售订</div>
<div class="t" style="top:656.05px;font-size:8.5px;line-height:11.90px;color:#4a5160;left:748.20px;">单</div>
<div class="t" style="top:629.65px;font-size:8.5px;line-height:11.90px;color:#4a5160;left:828.90px;">Dell电脑B型-水冷机箱</div>
<div class="t" style="top:629.65px;font-size:8.5px;line-height:11.90px;color:#4a5160;left:940.70px;letter-spacing:-0.2px;">C0013</div>
<div class="t" style="top:629.65px;font-size:8.5px;line-height:11.90px;color:#4a5160;left:1006.60px;">成品</div>
<div class="t" style="top:629.65px;font-size:8.5px;line-height:11.90px;color:#4a5160;left:1071.20px;letter-spacing:-0.2px;">B29002</div>
<div class="b" style="left:211.70px;top:677.60px;width:36.00px;height:14.80px;background:#34c763;border-radius:2.4px;"></div>
<div class="t" style="top:678.87px;font-size:8.9px;line-height:12.46px;color:#fff;left:211.70px;width:36px;text-align:center;">已完...</div>
<div class="b" style="left:274.80px;top:677.60px;width:46.00px;height:14.80px;background:#14b4d6;border-radius:2.4px;"></div>
<div class="t" style="top:678.87px;font-size:8.9px;line-height:12.46px;color:#fff;font-weight:600;left:274.80px;width:46px;text-align:center;">订单计划</div>
<div class="t" style="top:679.15px;font-size:8.5px;line-height:11.90px;color:#4a5160;left:350.20px;">第6月-生产计划</div>
<div class="t" style="top:692.35px;font-size:8.5px;line-height:11.90px;color:#4a5160;left:350.20px;letter-spacing:-0.2px;">2024.6A03</div>
<div class="t" style="top:679.15px;font-size:8.5px;line-height:11.90px;color:#4a5160;left:437.30px;letter-spacing:-0.42px;">SCJHXSDD240627-</div>
<div class="t" style="top:692.35px;font-size:8.5px;line-height:11.90px;color:#4a5160;left:437.30px;letter-spacing:-0.2px;">01-240628-02</div>
<div class="t" style="top:679.15px;font-size:8.5px;line-height:11.90px;color:#4a5160;left:523.60px;">2024-06-28</div>
<div class="t" style="top:679.15px;font-size:8.5px;line-height:11.90px;color:#4a5160;left:597.50px;">2024-07-20</div>
<div class="t" style="top:679.15px;font-size:8.5px;line-height:11.90px;color:#4a5160;left:672.30px;">2025-01-15</div>
<div class="t" style="top:679.15px;font-size:8.5px;line-height:11.90px;color:#4a5160;left:748.20px;">示例：无锡简道</div>
<div class="t" style="top:692.35px;font-size:8.5px;line-height:11.90px;color:#4a5160;left:748.20px;">云-第1份销售订</div>
<div class="t" style="top:705.55px;font-size:8.5px;line-height:11.90px;color:#4a5160;left:748.20px;">单</div>
<div class="t" style="top:679.15px;font-size:8.5px;line-height:11.90px;color:#4a5160;left:828.90px;">笔记本电脑</div>
<div class="t" style="top:679.15px;font-size:8.5px;line-height:11.90px;color:#4a5160;left:940.70px;letter-spacing:-0.2px;">C0005</div>
<div class="t" style="top:679.15px;font-size:8.5px;line-height:11.90px;color:#4a5160;left:1006.60px;">成品</div>
<div class="t" style="top:679.15px;font-size:8.5px;line-height:11.90px;color:#4a5160;left:1071.20px;letter-spacing:-0.2px;">戴尔最新版</div>
<div class="b" style="left:1194.40px;top:32.00px;width:5.60px;height:694.00px;background:#f4f4f7;"></div>
<div class="b" style="left:1194.60px;top:32.00px;width:8.00px;height:538.00px;background:#b7b9bf;border-radius:3.5px;"></div>
<svg class="b" style="left:0;top:0" width="1200" height="726" viewBox="0 0 1200 726"><path d="M1200 0v8a8 8 0 0 0 -8 -8z" fill="#f1f1f2"/><path d="M0 726v-6a6 6 0 0 0 6 6z" fill="#eeeeef"/><path d="M0 0v5a5 5 0 0 1 5 -5z" fill="#f4f4f4"/></svg>
</div></body></html>
